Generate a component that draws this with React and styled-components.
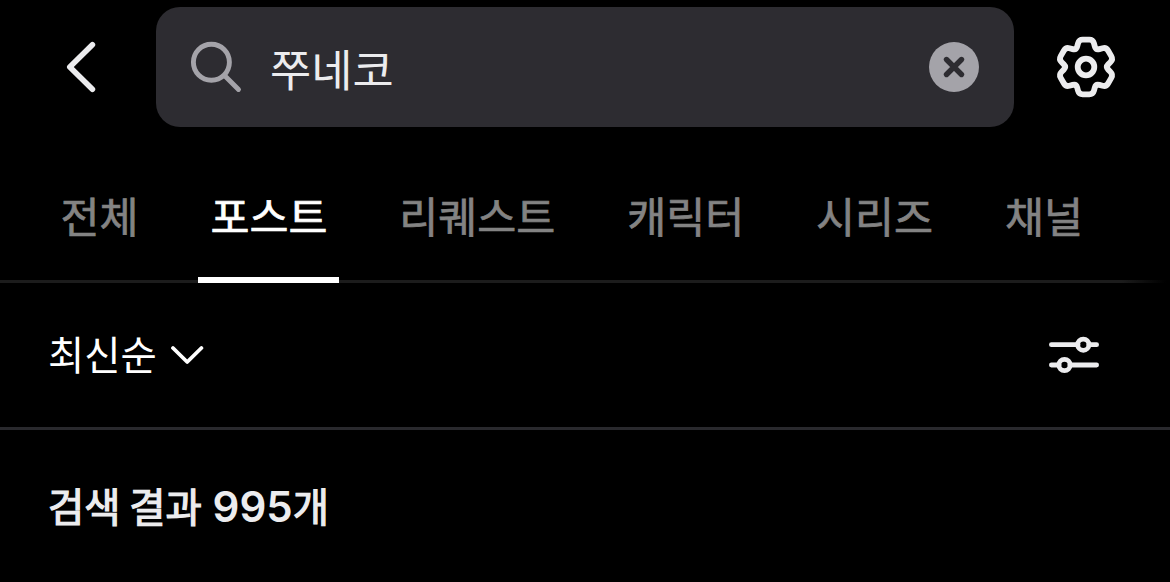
import React, { useState } from 'react'

import styled, { createGlobalStyle } from 'styled-components'

const GlobalStyle = createGlobalStyle`
  * {
    box-sizing: border-box;
  }
  body {
    margin: 0;
    background: #000;
    font-family: 'Noto Sans CJK KR', 'Noto Sans', sans-serif;
  }
`

const Page = styled.div`
  display: flex;
  flex-direction: column;
  width: 1170px;
  height: 582px;
  overflow: hidden;
  background: #000;
  color: #ececee;
`

const Header = styled.header`
  display: flex;
  align-items: center;
  height: 134px;
  padding: 0 52px 0 48px;
`

const IconButton = styled.button`
  display: flex;
  align-items: center;
  justify-content: center;
  flex: none;
  width: ${({ $size }) => $size}px;
  height: ${({ $size }) => $size}px;
  padding: 0;
  background: none;
  border: none;
  color: inherit;
  cursor: pointer;
`

const SearchField = styled.div`
  display: flex;
  flex: none;
  align-items: center;
  width: 858px;
  height: 120px;
  margin: 0 40px 0 42px;
  padding: 0 35px 0 33px;
  border-radius: 24px;
  background: #2d2c31;
`

const SearchInput = styled.input`
  flex: 1;
  min-width: 0;
  height: 72px;
  margin-left: 27px;
  padding: 1px 0 0;
  border: none;
  outline: none;
  background: none;
  color: #ececee;
  font-family: inherit;
  font-size: 44.8px;
  font-weight: 400;
`

const TabBar = styled.nav`
  display: flex;
  align-items: stretch;
  gap: 47.9px;
  height: 149px;
  padding: 0 48px 0 48.5px;
  background: linear-gradient(to right, #1c1c1c 1122px, #000 1166px) bottom / 100% 3px no-repeat;
`

const Tab = styled.button`
  flex: none;
  padding: 18px 12px 0;
  border: none;
  border-bottom: 6px solid ${({ $active }) => ($active ? '#fff' : 'transparent')};
  background: none;
  color: ${({ $active }) => ($active ? '#fff' : '#838383')};
  font-family: inherit;
  font-size: 42.4px;
  font-weight: 400;
  line-height: 60px;
  -webkit-text-stroke: 0.7px;
  cursor: pointer;
`

const SortBar = styled.div`
  display: flex;
  align-items: center;
  justify-content: space-between;
  height: 147px;
  padding: 0 71px 0 48px;
  border-bottom: 3px solid #29292d;
`

const SortButton = styled.button`
  display: flex;
  align-items: center;
  gap: 13px;
  padding: 0;
  border: none;
  background: none;
  color: #fff;
  font-family: inherit;
  font-size: 39.4px;
  cursor: pointer;
`

const SortLabel = styled.span`
  height: 60px;
  line-height: 56px;
`

const ResultTitle = styled.h2`
  margin: 46px 48px 0;
  font-size: 39.4px;
  font-weight: 400;
  line-height: 58px;
  -webkit-text-stroke: 1.2px;
`

const Count = styled.span`
  margin-left: 2px;
  font-family: Inter, sans-serif;
  font-size: 42px;
  font-weight: 600;
  -webkit-text-stroke: 0;
`

const TABS = ['전체', '포스트', '리퀘스트', '캐릭터', '시리즈', '채널']

// one sixth of the gear outline: notch, then the two corners of a tooth
const GEAR_SHAPE = [
  [-30, 19.6],
  [-14.3, 28.2],
  [14.3, 28.2],
]

function gearPath() {
  const points = []
  for (let i = 0; i < 6; i++) {
    GEAR_SHAPE.forEach(([angle, radius]) => {
      const a = ((angle + i * 60) * Math.PI) / 180
      points.push([Math.sin(a) * radius, -Math.cos(a) * radius])
    })
  }
  const toward = (from, to) => {
    const length = Math.hypot(to[0] - from[0], to[1] - from[1])
    const t = 3.7 / length
    return [from[0] + (to[0] - from[0]) * t, from[1] + (to[1] - from[1]) * t]
  }
  const format = (p) => p.map((n) => n.toFixed(2)).join(' ')
  const parts = points.map((p, i) => {
    const prev = points[(i + points.length - 1) % points.length]
    const next = points[(i + 1) % points.length]
    return `${i ? 'L' : 'M'}${format(toward(p, prev))}Q${format(p)} ${format(toward(p, next))}`
  })
  return `${parts.join('')}Z`
}

const GEAR_PATH = gearPath()

const BackIcon = () => (
  <svg width="66" height="66" viewBox="0 0 66 66" fill="none" stroke="currentColor">
    <path d="M44.4 10.8 21.8 33l22.6 22.2" strokeWidth="5.6" strokeLinecap="round" strokeLinejoin="round" />
  </svg>
)

const SearchIcon = () => (
  <svg width="54" height="54" viewBox="0 0 54 54" fill="none" stroke="#a4a3a9">
    <circle cx="22.4" cy="22.3" r="18" strokeWidth="4.9" />
    <path d="M35.5 35.5 49.5 49.5" strokeWidth="4.9" strokeLinecap="round" />
  </svg>
)

const ClearIcon = () => (
  <svg width="50" height="50" viewBox="0 0 50 50" fill="none">
    <circle cx="25" cy="25" r="25" fill="#a4a3a9" />
    <path d="m17.5 17.5 15 15m0-15-15 15" stroke="#2d2c31" strokeWidth="5.4" strokeLinecap="round" />
  </svg>
)

const GearIcon = () => (
  <svg width="64" height="64" viewBox="-32 -32 64 64" fill="none" stroke="currentColor">
    <path d={GEAR_PATH} strokeWidth="5.8" strokeLinejoin="round" />
    <circle r="8.3" strokeWidth="5.8" />
  </svg>
)

const ChevronIcon = () => (
  <svg width="34" height="24" viewBox="0 0 34 24" fill="none" stroke="currentColor">
    <path d="m3 5 14.2 14L31.4 5" strokeWidth="3.8" strokeLinecap="round" strokeLinejoin="round" />
  </svg>
)

const FilterIcon = () => (
  <svg width="50" height="40" viewBox="0 0 50 40" fill="none" stroke="currentColor" strokeWidth="4.8" strokeLinecap="round">
    <path d="M2.4 9.7H29M40 9.7h7.6" />
    <circle cx="34.3" cy="9.7" r="5.6" />
    <path d="M2.4 30H10M21 30h26.6" />
    <circle cx="15.5" cy="30" r="5.6" />
  </svg>
)

export default function App() {
  const [query, setQuery] = useState('쭈네코')
  const [activeTab, setActiveTab] = useState('포스트')

  return (
    <Page>
      <GlobalStyle />
      <Header>
        <IconButton $size={66} aria-label="뒤로">
          <BackIcon />
        </IconButton>
        <SearchField>
          <SearchIcon />
          <SearchInput value={query} onChange={(e) => setQuery(e.target.value)} />
          <IconButton $size={50} aria-label="지우기" onClick={() => setQuery('')}>
            <ClearIcon />
          </IconButton>
        </SearchField>
        <IconButton $size={64} aria-label="설정">
          <GearIcon />
        </IconButton>
      </Header>
      <TabBar>
        {TABS.map((tab) => (
          <Tab key={tab} $active={tab === activeTab} onClick={() => setActiveTab(tab)}>
            {tab}
          </Tab>
        ))}
      </TabBar>
      <SortBar>
        <SortButton>
          <SortLabel>최신순</SortLabel>
          <ChevronIcon />
        </SortButton>
        <IconButton $size={50} aria-label="필터">
          <FilterIcon />
        </IconButton>
      </SortBar>
      <ResultTitle>
        검색 결과 <Count>995</Count>개
      </ResultTitle>
    </Page>
  )
}
